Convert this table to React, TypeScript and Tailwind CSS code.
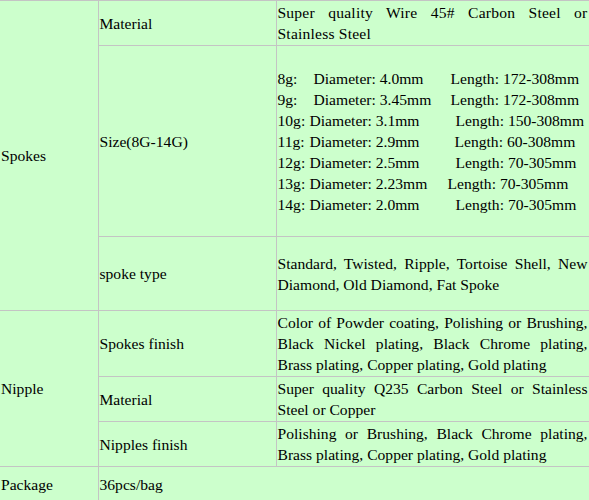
import React from 'react';

const sizes: [string, number, string, number, string][] = [
  ['8g:', 36, 'Diameter: 4.0mm', 137, 'Length: 172-308mm'],
  ['9g:', 36, 'Diameter: 3.45mm', 137, 'Length: 172-308mm'],
  ['10g:', 32, 'Diameter: 3.1mm', 146, 'Length: 150-308mm'],
  ['11g:', 32, 'Diameter: 2.9mm', 145, 'Length: 60-308mm'],
  ['12g:', 32, 'Diameter: 2.5mm', 146, 'Length: 70-305mm'],
  ['13g:', 32, 'Diameter: 2.23mm', 138, 'Length: 70-305mm'],
  ['14g:', 32, 'Diameter: 2.0mm', 146, 'Length: 70-305mm'],
];

const cell = 'border border-[#c4c4c4] p-[1px] align-middle';
const first = 'border-l-0';

function App() {
  return (
    <div className="w-[589px] h-[500px] overflow-hidden bg-[#ccffcc] text-black font-['Liberation_Serif','Times_New_Roman',serif] text-[15.6px] leading-[21px]">
      <table className="w-[589px] table-fixed border-collapse">
        <colgroup>
          <col className="w-[98px]" />
          <col className="w-[178px]" />
          <col className="w-[313px]" />
        </colgroup>
        <tbody>
          <tr className="h-[45px]">
            <td rowSpan={3} className={`${cell} ${first}`}>Spokes</td>
            <td className={cell}>Material</td>
            <td className={`${cell} text-justify tracking-[0.2px]`}>
              Super quality Wire 45# Carbon Steel or Stainless Steel
            </td>
          </tr>
          <tr className="h-[191px]">
            <td className={cell}>Size(8G-14G)</td>
            <td className={cell}>
              {sizes.map(([g, w1, d, w2, l]) => (
                <div key={g} className="whitespace-nowrap">
                  <span className="inline-block" style={{ width: w1 }}>{g}</span>
                  <span className="inline-block" style={{ width: w2 }}>{d}</span>
                  <span>{l}</span>
                </div>
              ))}
            </td>
          </tr>
          <tr className="h-[74px]">
            <td className={cell}>spoke type</td>
            <td className={`${cell} text-justify`}>
              Standard, Twisted, Ripple, Tortoise Shell, New Diamond, Old Diamond, Fat Spoke
            </td>
          </tr>
          <tr className="h-[66px]">
            <td rowSpan={3} className={`${cell} ${first}`}>Nipple</td>
            <td className={cell}>Spokes finish</td>
            <td className={`${cell} text-justify`}>
              Color of Powder coating, Polishing or Brushing, Black Nickel plating, Black Chrome plating, Brass plating, Copper plating, Gold plating
            </td>
          </tr>
          <tr className="h-[44px]">
            <td className={cell}>Material</td>
            <td className={`${cell} text-justify`}>
              Super quality Q235 Carbon Steel or Stainless Steel or Copper
            </td>
          </tr>
          <tr className="h-[45px]">
            <td className={cell}>Nipples finish</td>
            <td className={`${cell} text-justify`}>
              Polishing or Brushing, Black Chrome plating, Brass plating, Copper plating, Gold plating
            </td>
          </tr>
          <tr className="h-[36px]">
            <td className={`${cell} ${first}`}>Package</td>
            <td colSpan={2} className={cell}>36pcs/bag</td>
          </tr>
        </tbody>
      </table>
    </div>
  );
}

export default App;
